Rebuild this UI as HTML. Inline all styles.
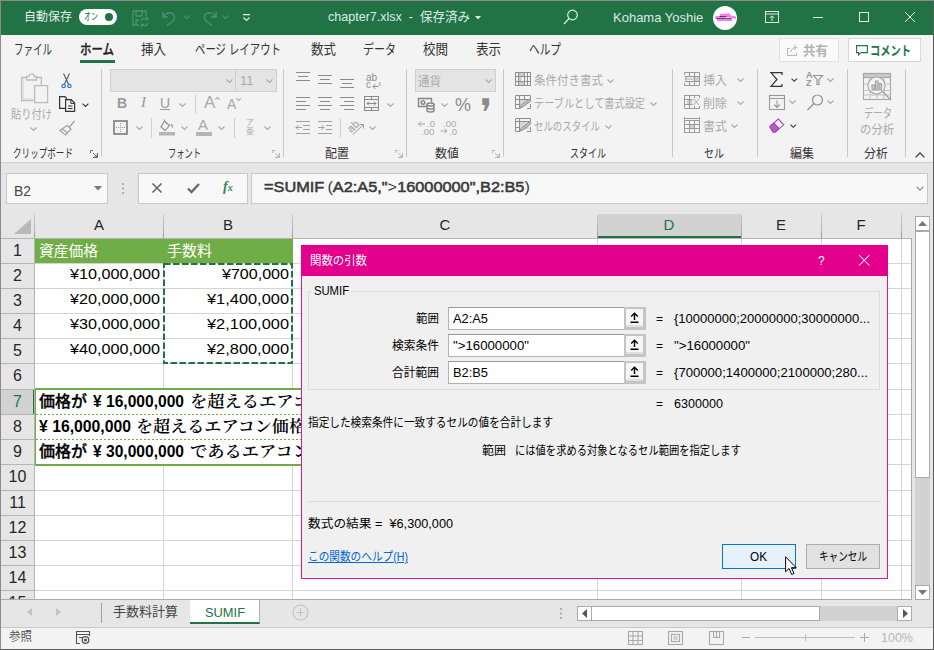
<!DOCTYPE html>
<html lang="ja"><head><meta charset="utf-8"><title>chapter7.xlsx</title>
<style>
*{box-sizing:border-box;margin:0;padding:0}
html,body{width:934px;height:650px;overflow:hidden;background:#e6e6e6}
body{font-family:"Liberation Sans","Noto Sans CJK JP",sans-serif;font-size:12px;color:#333;position:relative}
.a{position:absolute;white-space:nowrap}
.t{position:absolute;white-space:nowrap;line-height:1}
#titlebar{left:0;top:0;width:934px;height:35px;background:#217346}
#tabs{left:0;top:35px;width:934px;height:29px;background:#f3f3f3}
#ribbon{left:0;top:64px;width:934px;height:99px;background:#f3f3f3;border-bottom:1px solid #d0d0d0}
.gl{position:absolute;top:84px;font-size:12px;line-height:1;color:#333;white-space:nowrap}
.sep{position:absolute;top:5px;width:1px;height:88px;background:#c8c8c8}
.ssep{position:absolute;width:1px;height:20px;background:#d0d0d0}
.dis{color:#a9a9a9}
svg{position:absolute;overflow:visible}
.ch{fill:none;stroke:#a9a9a9;stroke-width:1.1}
.chd{fill:none;stroke:#333;stroke-width:1.3}
.ln{position:absolute;background:#d4d4d4}
.rh{position:absolute;left:1px;width:33px;text-align:center;font-size:16px;line-height:1;color:#262626}
.cell{position:absolute;font-size:15px;line-height:1;color:#000;white-space:nowrap}
.dl{position:absolute;white-space:nowrap;line-height:1;font-size:12px;color:#000}
.inp{position:absolute;left:147px;width:198px;height:23px;background:#fff;border:1px solid #b2b2b2;border-top-color:#999}
.ibtn{position:absolute;left:323px;width:22px;height:23px;background:#f6f6f6;border:3px solid #c4c4c4;border-top-width:2px;border-left-width:2px;box-shadow:inset 0 -2px 0 #e0e0e0}
</style></head><body>
<div id="titlebar" class="a">
<div class="t" style="left: 24px; top: 11px; font-size: 12.5px; color: rgb(228, 239, 232); transform: scaleX(0.96); transform-origin: 0px 0px;">自動保存</div>
<div class="a" style="left:79px;top:9px;width:38px;height:16px;border-radius:8px;background:#fff"></div>
<div class="t" style="left: 84px; top: 12px; font-size: 10px; color: rgb(33, 115, 70); transform: scaleX(0.7); transform-origin: 0px 0px;">オン</div>
<div class="a" style="left:105px;top:13px;width:8px;height:8px;border-radius:4px;background:#217346"></div>
<svg style="left:132px;top:10px" width="18" height="17" viewBox="0 0 18 17" fill="none" stroke="#4d9270" stroke-width="1.3"><path d="M1 1h13v6M1 1v14h6M4 1v5h6V1M4 15v-5h3"></path><path d="M9 11a3.5 3.5 0 0 1 6-1.5M16 13a3.5 3.5 0 0 1-6 1.5M15.5 7v2.7h-2.7M9.5 17v-2.7h2.7"></path></svg>
<svg style="left:162px;top:10px" width="16" height="16" viewBox="0 0 16 16" fill="none" stroke="#4d9270" stroke-width="1.4"><path d="M1 2v5h5M1.5 7C3 3.5 7 1.5 10.500 3.500c3 2 2.500 6 0 8L5 15.500"></path></svg>
<svg style="left:183px;top:15px" width="7" height="5" viewBox="0 0 7 5" fill="none" stroke="#4d9270" stroke-width="1.1"><path d="M.5.5l3 3 3-3"></path></svg>
<svg style="left:201px;top:10px" width="16" height="16" viewBox="0 0 16 16" fill="none" stroke="#4d9270" stroke-width="1.4"><path d="M15 2v5h-5M14.500 7C13 3.500 9 1.500 5.500 3.500c-3 2-2.500 6 0 8L11 15.500"></path></svg>
<svg style="left:222px;top:15px" width="7" height="5" viewBox="0 0 7 5" fill="none" stroke="#4d9270" stroke-width="1.1"><path d="M.5.5l3 3 3-3"></path></svg>
<svg style="left:243px;top:14px" width="8" height="8" viewBox="0 0 8 8" fill="none" stroke="#e4efe8" stroke-width="1.1"><path d="M0 .6h7M.5 3.500l3 3 3-3"></path></svg>
<div class="t" style="left: 328px; top: 10px; font-size: 13px; color: rgb(220, 235, 226); transform: scaleX(0.964); transform-origin: 0px 0px;">chapter7.xlsx&nbsp; -&nbsp; 保存済み</div>
<svg style="left:475px;top:16px" width="6" height="4" viewBox="0 0 6 4"><path d="M0 0h6L3 3.500z" fill="#dcebe2"></path></svg>
<svg style="left:563px;top:9px" width="16" height="16" viewBox="0 0 16 16" fill="none" stroke="#dcebe2" stroke-width="1.2"><circle cx="9.500" cy="6" r="4.800"></circle><path d="M6 9.500L1 15"></path></svg>
<div class="t" style="left:613px;top:11px;font-size:13px;color:#dcebe2">Kohama Yoshie</div>
<div class="a" style="left:713px;top:6px;width:24px;height:24px;border-radius:12px;background:#fff"></div>
<svg style="left:713px;top:6px" width="24" height="24" viewBox="0 0 24 24" fill="none" stroke="#f57df0" stroke-width="2.400" stroke-linecap="round"><path d="M3 11.500c3-1 6 1 9-1s5 1 10 1M5 14c4 .5 8-1 13 0M8 9c2-.5 5 .5 8-.5"></path><path d="M4 12.500h14M7 10.500h6" stroke="#222" stroke-width=".8" stroke-dasharray="1.500 1"></path></svg>
<svg style="left:765px;top:11px" width="14" height="12" viewBox="0 0 14 12" fill="none" stroke="#dcebe2" stroke-width="1"><rect x=".5" y=".5" width="13" height="11"></rect><path d="M.5 3h13M7 10V5M4.800 7L7 4.800 9.200 7"></path></svg>
<div class="a" style="left:813px;top:17px;width:10px;height:1px;background:#dcebe2"></div>
<div class="a" style="left:859px;top:12px;width:10px;height:10px;border:1px solid #dcebe2"></div>
<svg style="left:905px;top:12px" width="10" height="10" viewBox="0 0 11 11" stroke="#dcebe2" stroke-width="1.100"><path d="M0 0l11 11M11 0L0 11"></path></svg>
</div>
<div id="tabs" class="a">
<div class="t" style="left: 14px; top: 7px; font-size: 14px; transform: scaleX(0.679); transform-origin: 0px 0px;">ファイル</div>
<div class="t" style="left: 80px; top: 7px; font-size: 14px; font-weight: 500; -webkit-text-stroke: 0.35px rgb(34, 34, 34); color: rgb(34, 34, 34); transform: scaleX(0.817); transform-origin: 0px 0px;">ホーム</div>
<div class="a" style="left:80px;top:25px;width:35px;height:3px;background:#217346"></div>
<div class="t" style="left: 141px; top: 7px; font-size: 14px; transform: scaleX(0.893); transform-origin: 0px 0px;">挿入</div>
<div class="t" style="left: 195px; top: 7px; font-size: 14px; transform: scaleX(0.744); transform-origin: 0px 0px;">ページ レイアウト</div>
<div class="t" style="left: 311px; top: 7px; font-size: 14px; transform: scaleX(0.893); transform-origin: 0px 0px;">数式</div>
<div class="t" style="left: 363px; top: 7px; font-size: 14px; transform: scaleX(0.786); transform-origin: 0px 0px;">データ</div>
<div class="t" style="left: 423px; top: 7px; font-size: 14px; transform: scaleX(0.893); transform-origin: 0px 0px;">校閲</div>
<div class="t" style="left: 476px; top: 7px; font-size: 14px; transform: scaleX(0.893); transform-origin: 0px 0px;">表示</div>
<div class="t" style="left: 529px; top: 7px; font-size: 14px; transform: scaleX(0.762); transform-origin: 0px 0px;">ヘルプ</div>
<div class="a" style="left:779px;top:3px;width:60px;height:24px;background:#fafafa;border:1px solid #e1e1e1"></div>
<svg style="left:787px;top:9px" width="12" height="12" viewBox="0 0 12 12" fill="none" stroke="#b5b5b5" stroke-width="1"><path d="M3 4.500H.5v7h9V9M4 8c0-3 2-4.500 5-4.500M7 1l2.700 2.500L7 6"></path></svg>
<div class="t" style="left: 803px; top: 9px; font-size: 13px; font-weight: bold; color: rgb(179, 179, 179); transform: scaleX(0.961); transform-origin: 0px 0px;">共有</div>
<div class="a" style="left:848px;top:3px;width:73px;height:24px;background:#fff;border:1px solid #d8d8d8"></div>
<svg style="left:856px;top:10px" width="12" height="11" viewBox="0 0 12 11" fill="none" stroke="#217346" stroke-width="1.100"><path d="M.6.6h10.800v7H5L2.500 10V7.600H.6z"></path></svg>
<div class="t" style="left: 870px; top: 9px; font-size: 13px; font-weight: bold; color: rgb(33, 115, 70); transform: scaleX(0.788); transform-origin: 0px 0px;">コメント</div>
</div>
<div id="ribbon" class="a">
<!-- clipboard -->
<svg style="left:21px;top:9px" width="28" height="31" viewBox="0 0 28 31" fill="none" stroke="#bdbdbd" stroke-width="1.300"><path d="M6 4.500H.6v23h12M15 4.500h5.400v8"></path><path d="M2.200 6v20h11" stroke="#dedede" stroke-width="1.600"></path><path d="M5.500 7V3.500h2.300a2.700 2.700 0 0 1 5.400 0h2.300V7z" fill="#f3f3f3"></path><rect x="13.600" y="12.600" width="13" height="17" fill="#f3f3f3"></rect></svg>
<div class="t dis" style="left: 11px; top: 45px; font-size: 12px; transform: scaleX(0.854); transform-origin: 0px 0px;">貼り付け</div>
<svg style="left:30px;top:63px" width="7" height="5" viewBox="0 0 7 5" class="ch"><path d="M.5.5l3 3 3-3"></path></svg>
<svg style="left:61px;top:9px" width="11" height="16" viewBox="0 0 11 16" fill="none"><path d="M2.500 0.500L7.500 11M8.500 0.500L3.500 11" stroke="#555" stroke-width="1.100"></path><circle cx="2.600" cy="13" r="1.700" stroke="#2b7cd3" stroke-width="1.200"></circle><circle cx="8.400" cy="13" r="1.700" stroke="#2b7cd3" stroke-width="1.200"></circle></svg>
<svg style="left:59px;top:32px" width="17" height="16" viewBox="0 0 17 16" fill="none" stroke="#333" stroke-width="1.200"><path d="M6 12.400H.6V.6h5.400l2 2.200"></path><path d="M6.600 3.600h5.600l3.400 3.400v8.400h-9z" fill="#f3f3f3"></path><path d="M11.800 3.600v3.800h3.800M9 10h4.500M9 12.500h4.500" stroke-width="1"></path></svg>
<svg style="left:81.500px;top:38.500px" width="7" height="4.400" viewBox="0 0 8 5" class="chd"><path d="M.7.700l3.300 3.300 3.300-3.300"></path></svg>
<svg style="left:59px;top:56px" width="17" height="16" viewBox="0 0 17 16" fill="none" stroke="#a0a0a0" stroke-width="1.200"><path d="M15.500 1l-5 6M8 5.500l4 3.500-5.500 6L1 10.500zM3.500 9l5 4"></path></svg>
<div class="gl" style="left: 13px; transform: scaleX(0.714); transform-origin: 0px 0px;">クリップボード</div>
<svg style="left:90px;top:86px" width="8" height="8" viewBox="0 0 8 8" fill="none" stroke="#666" stroke-width="1"><path d="M.5 3V.5H3M7.500 3v4.500H3M3 3l4 4M7 4.500V7H4.500"></path></svg>
<div class="sep" style="left:101px"></div>
<!-- font -->
<div class="a" style="left:110px;top:5px;width:126px;height:23px;background:#e4e4e4;border:1px solid #cfcfcf"></div>
<div class="a" style="left:235px;top:5px;width:42px;height:23px;background:#e4e4e4;border:1px solid #cfcfcf"></div>
<svg style="left:226px;top:15px" width="7" height="5" viewBox="0 0 7 5" class="ch"><path d="M.5.5l3 3 3-3"></path></svg>
<div class="t dis" style="left:240px;top:10px;font-size:13px">11</div>
<svg style="left:266px;top:15px" width="7" height="5" viewBox="0 0 7 5" class="ch"><path d="M.5.5l3 3 3-3"></path></svg>
<div class="t" style="left:117px;top:32px;font-size:14px;font-weight:bold;color:#999">B</div>
<div class="t" style="left:141px;top:31px;font-size:15px;font-style:italic;color:#999;font-family:'Liberation Serif',serif">I</div>
<div class="t" style="left:160px;top:32px;font-size:14px;text-decoration:underline;color:#999">U</div>
<svg style="left:179px;top:39px" width="7" height="5" viewBox="0 0 7 5" class="ch"><path d="M.5.5l3 3 3-3"></path></svg>
<div class="ssep" style="left:195px;top:30px"></div>
<div class="t dis" style="left:204px;top:30px;font-size:17px">A</div>
<svg style="left:215px;top:33px" width="5" height="3" viewBox="0 0 5 3" class="ch"><path d="M.3 2.700l2.200-2.200 2.200 2.200"></path></svg>
<div class="t dis" style="left:227px;top:33px;font-size:14px">A</div>
<svg style="left:236px;top:34px" width="5" height="3" viewBox="0 0 5 3" class="ch"><path d="M.3.300l2.200 2.200 2.200-2.200"></path></svg>
<svg style="left:113px;top:56px" width="15" height="15" viewBox="0 0 15 15" fill="none"><rect x="1" y="1" width="13" height="13" stroke="#7a7a7a" stroke-width="1.600"></rect><path d="M7.500 3v9M3 7.500h9" stroke="#9a9a9a" stroke-width="1" stroke-dasharray="1 1"></path></svg>
<svg style="left:136px;top:62px" width="7" height="5" viewBox="0 0 7 5" class="ch"><path d="M.5.5l3 3 3-3"></path></svg>
<div class="ssep" style="left:151px;top:54px"></div>
<svg style="left:159px;top:55px" width="17" height="17" viewBox="0 0 17 17" fill="none"><path d="M5.500 2l5 4.500-4.500 5L2 8zM5.500 2V.5M11.500 5.500c1.500 0 2 2 2 3" stroke="#8a8a8a" stroke-width="1.100"></path><rect x="0" y="13" width="16" height="3.500" fill="#b4b4b4"></rect></svg>
<svg style="left:181px;top:62px" width="7" height="5" viewBox="0 0 7 5" class="ch"><path d="M.5.5l3 3 3-3"></path></svg>
<div class="t dis" style="left:198px;top:53px;font-size:15px">A</div>
<div class="a" style="left:196px;top:68px;width:16px;height:4px;background:#b4b4b4"></div>
<svg style="left:218px;top:62px" width="7" height="5" viewBox="0 0 7 5" class="ch"><path d="M.5.5l3 3 3-3"></path></svg>
<div class="ssep" style="left:234px;top:54px"></div>
<div class="t dis" style="left:246px;top:55px;font-size:8px">ア</div>
<div class="t dis" style="left:246px;top:64px;font-size:8px">亜</div>
<svg style="left:264px;top:62px" width="7" height="5" viewBox="0 0 7 5" class="ch"><path d="M.5.5l3 3 3-3"></path></svg>
<div class="gl" style="left: 168px; transform: scaleX(0.687); transform-origin: 0px 0px;">フォント</div>
<svg style="left:272px;top:86px" width="8" height="8" viewBox="0 0 8 8" fill="none" stroke="#b5b5b5" stroke-width="1"><path d="M.5 3V.5H3M7.500 3v4.500H3M3 3l4 4M7 4.500V7H4.500"></path></svg>
<div class="sep" style="left:283px"></div>
<!-- alignment -->
<svg style="left:296px;top:8px" width="60" height="16" viewBox="0 0 60 16" stroke="#8a8a8a" stroke-width="1" fill="none"><path d="M0 .5h14M2 4.500h10M0 8.500h14"></path><path d="M22 3.500h14M24 7.500h10M22 11.500h14"></path><path d="M44 7.500h14M46 11.500h10M44 15.500h14"></path></svg>
<div class="t dis" style="left:366px;top:9px;font-size:10px;color:#8f8f8f">ab</div>
<div class="t dis" style="left:366px;top:16px;font-size:10px;color:#8f8f8f">c</div>
<svg style="left:372px;top:18px" width="9" height="8" viewBox="0 0 9 8" fill="none" stroke="#8f8f8f" stroke-width="1"><path d="M7.500 0c1.500 2 0 4.500-2.500 4.500H1M3.500 2L1 4.500 3.500 7"></path></svg>
<svg style="left:296px;top:33px" width="60" height="14" viewBox="0 0 60 14" stroke="#8a8a8a" stroke-width="1" fill="none"><path d="M0 .5h14M0 4.500h10M0 8.500h14M0 12.500h10"></path><path d="M22 .5h14M24 4.500h10M22 8.500h14M24 12.500h10"></path><path d="M44 .5h14M48 4.500h10M44 8.500h14M48 12.500h10"></path></svg>
<svg style="left:364px;top:32px" width="16" height="15" viewBox="0 0 16 15" fill="none" stroke="#8a8a8a" stroke-width="1"><rect x=".5" y=".5" width="14" height="14"></rect><path d="M.5 3.500h14M.5 11.500h14M7.500 .5v3M7.500 11.500v3M3 7.500h9M5 5.500l-2 2 2 2M10 5.500l2 2-2 2"></path></svg>
<svg style="left:387px;top:39px" width="7" height="5" viewBox="0 0 7 5" class="ch"><path d="M.5.5l3 3 3-3"></path></svg>
<svg style="left:296px;top:57px" width="38" height="14" viewBox="0 0 38 14" stroke="#a0a0a0" stroke-width="1" fill="none"><path d="M0 .5h14M7 4.500h7M7 8.500h7M0 12.500h14M6 6.500H0M2.500 4L0 6.500 2.500 9"></path><path d="M22 .5h14M30 4.500h6M30 8.500h6M22 12.500h14M22 6.500h6M25.500 4L28 6.500 25.500 9"></path></svg>
<div class="ssep" style="left:340px;top:54px"></div>
<div class="t dis" style="left:347px;top:57px;font-size:11px;transform:rotate(-42deg);color:#9a9a9a">ab</div>
<svg style="left:353px;top:60px" width="11" height="11" viewBox="0 0 11 11" fill="none" stroke="#9a9a9a" stroke-width="1"><path d="M0 10.500L10.500 .5M6.500 .5h4v4"></path></svg>
<svg style="left:369px;top:62px" width="7" height="5" viewBox="0 0 7 5" class="ch"><path d="M.5.5l3 3 3-3"></path></svg>
<div class="gl" style="left: 325px; transform: scaleX(0.999); transform-origin: 0px 0px;">配置</div>
<svg style="left:395px;top:86px" width="8" height="8" viewBox="0 0 8 8" fill="none" stroke="#b5b5b5" stroke-width="1"><path d="M.5 3V.5H3M7.500 3v4.500H3M3 3l4 4M7 4.500V7H4.500"></path></svg>
<div class="sep" style="left:406px"></div>
<!-- number -->
<div class="a" style="left:415px;top:5px;width:81px;height:23px;background:#e4e4e4;border:1px solid #cfcfcf"></div>
<div class="t dis" style="left: 418px; top: 12px; font-size: 12px; transform: scaleX(0.958); transform-origin: 0px 0px;">通貨</div>
<svg style="left:485px;top:15px" width="7" height="5" viewBox="0 0 7 5" class="ch"><path d="M.5.5l3 3 3-3"></path></svg>
<svg style="left:418px;top:34px" width="17" height="15" viewBox="0 0 17 15" fill="none" stroke="#858585" stroke-width="1.400"><path d="M9 8.500H.5v-8h13V4"></path><circle cx="5" cy="4.500" r="1.800"></circle><ellipse cx="12.500" cy="6.500" rx="3.500" ry="1.500"></ellipse><path d="M9 6.500v6c0 .8 1.500 1.500 3.500 1.500s3.500-.7 3.500-1.500v-6M9 9.500c0 .8 1.500 1.500 3.500 1.500S16 10.300 16 9.500"></path></svg>
<svg style="left:441px;top:39px" width="7" height="5" viewBox="0 0 7 5" class="ch"><path d="M.5.5l3 3 3-3"></path></svg>
<div class="t" style="left:455px;top:32px;font-size:18px;color:#8a8a8a">%</div>
<div class="t" style="left:480px;top:30px;font-size:38px;color:#8a8a8a;font-family:'DejaVu Sans',sans-serif">❜</div>
<svg style="left:418px;top:57px" width="16" height="8" viewBox="0 0 16 8" fill="none" stroke="#a5a5a5" stroke-width="1"><path d="M7 3H.5M3 .5L.5 3 3 5.500"></path></svg>
<div class="t dis" style="left:427px;top:55px;font-size:9.500px">.0</div>
<div class="t dis" style="left:421px;top:63px;font-size:9.500px">.00</div>
<div class="t dis" style="left:443px;top:55px;font-size:9.500px">.00</div>
<svg style="left:440px;top:64px" width="16" height="8" viewBox="0 0 16 8" fill="none" stroke="#a5a5a5" stroke-width="1"><path d="M.5 3H7M4.500 .5L7 3 4.500 5.500"></path></svg>
<div class="t dis" style="left:449px;top:63px;font-size:9.500px">.0</div>
<div class="gl" style="left: 435px; transform: scaleX(0.999); transform-origin: 0px 0px;">数値</div>
<svg style="left:492px;top:86px" width="8" height="8" viewBox="0 0 8 8" fill="none" stroke="#b5b5b5" stroke-width="1"><path d="M.5 3V.5H3M7.500 3v4.500H3M3 3l4 4M7 4.500V7H4.500"></path></svg>
<div class="sep" style="left:503px"></div>
<!-- styles -->
<svg style="left:515px;top:8px" width="16" height="14" viewBox="0 0 16 14" fill="none" stroke="#8f8f8f" stroke-width="1"><rect x="3.500" y=".5" width="6" height="4" fill="#cdcdcd" stroke="none"></rect><rect x="3.500" y="4.500" width="3" height="4.500" fill="#cdcdcd" stroke="none"></rect><rect x="3.500" y="9" width="6" height="4" fill="#cdcdcd" stroke="none"></rect><rect x=".5" y=".5" width="15" height="13"></rect><path d="M.5 4.500h15M.5 9.500h15M3.500 .5v13M9.500 .5v13M12.500 .5v13"></path></svg>
<div class="t dis" style="left: 534px; top: 11px; font-size: 12px; transform: scaleX(0.958); transform-origin: 0px 0px;">条件付き書式</div>
<svg style="left:607px;top:15px" width="7" height="5" viewBox="0 0 7 5" class="ch"><path d="M.5.5l3 3 3-3"></path></svg>
<svg style="left:515px;top:31px" width="16" height="14" viewBox="0 0 16 14" fill="none" stroke="#8f8f8f" stroke-width="1"><rect x="4.500" y="4.500" width="7" height="6" fill="#d6d6d6" stroke="none"></rect><path d="M5 13.500H.5V.5h15V5M.5 4.500h15M.5 9.500h5M4.500 .5v13M9.500 .5v5M15.500 9v4.500H12"></path><path d="M4.500 13.500l2-3.500 8-6 1.500 1.800-8 6z" fill="#c0c0c0" stroke="#8f8f8f"></path></svg>
<div class="t dis" style="left: 534px; top: 34px; font-size: 12px; transform: scaleX(0.848); transform-origin: 0px 0px;">テーブルとして書式設定</div>
<svg style="left:650px;top:38px" width="7" height="5" viewBox="0 0 7 5" class="ch"><path d="M.5.5l3 3 3-3"></path></svg>
<svg style="left:515px;top:54px" width="16" height="14" viewBox="0 0 16 14" fill="none" stroke="#8f8f8f" stroke-width="1"><rect x="4.500" y="3.500" width="9" height="8" fill="#d6d6d6" stroke="none"></rect><path d="M5 13.500H.5V.5h15V4M.5 3.500h15M.5 9.500h4M4.500 .5v13M15.500 9v4.500H12"></path><path d="M4.500 13.500l2-3.500 8-6 1.500 1.800-8 6z" fill="#c0c0c0" stroke="#8f8f8f"></path></svg>
<div class="t dis" style="left: 534px; top: 57px; font-size: 12px; transform: scaleX(0.786); transform-origin: 0px 0px;">セルのスタイル</div>
<svg style="left:605px;top:61px" width="7" height="5" viewBox="0 0 7 5" class="ch"><path d="M.5.5l3 3 3-3"></path></svg>
<div class="gl" style="left: 570px; transform: scaleX(0.75); transform-origin: 0px 0px;">スタイル</div>
<div class="sep" style="left:672px"></div>
<!-- cells -->
<svg style="left:684px;top:8px" width="16" height="14" viewBox="0 0 16 14" fill="none" stroke="#9a9a9a" stroke-width="1"><rect x="9.500" y="4.500" width="6" height="5" fill="#cfcfcf" stroke="none"></rect><path d="M.5 3V.5h15v13H.5V11M.5 4.500h15M.5 9.500h15M5.500 .5v4M5.500 9.500v4M10.500 .5v13"></path><path d="M9 7H1M3.500 4.500L1 7l2.500 2.500" stroke="#a8a8a8"></path></svg>
<div class="t dis" style="left: 703px; top: 11px; font-size: 12px; transform: scaleX(0.999); transform-origin: 0px 0px;">挿入</div>
<svg style="left:737px;top:14px" width="7" height="5" viewBox="0 0 7 5" class="ch"><path d="M.5.5l3 3 3-3"></path></svg>
<svg style="left:684px;top:31px" width="16" height="14" viewBox="0 0 16 14" fill="none" stroke="#9a9a9a" stroke-width="1"><rect x="3" y="4.500" width="5.500" height="5" fill="#cfcfcf" stroke="none"></rect><path d="M15.500 3V.5H.5v13h15V11M.5 4.500h8M.5 9.500h8M5.500 .5v13M10.500 .5v2.500M10.500 11v2.500"></path><path d="M9.500 4l5.500 6M15 4l-5.500 6" stroke="#a8a8a8"></path></svg>
<div class="t dis" style="left: 703px; top: 34px; font-size: 12px; transform: scaleX(0.999); transform-origin: 0px 0px;">削除</div>
<svg style="left:737px;top:37px" width="7" height="5" viewBox="0 0 7 5" class="ch"><path d="M.5.5l3 3 3-3"></path></svg>
<svg style="left:684px;top:53px" width="16" height="16" viewBox="0 0 16 16" fill="none" stroke="#9a9a9a" stroke-width="1"><rect x="5.500" y="7.500" width="5" height="4" fill="#cfcfcf" stroke="none"></rect><rect x=".5" y="3.500" width="15" height="12"></rect><path d="M.5 7.500h15M.5 11.500h15M5.500 3.500v12M10.500 3.500v12M.5 0v2.500M15.500 0v2.500M.5 1.500h15"></path></svg>
<div class="t dis" style="left: 703px; top: 57px; font-size: 12px; transform: scaleX(0.999); transform-origin: 0px 0px;">書式</div>
<svg style="left:731px;top:60px" width="7" height="5" viewBox="0 0 7 5" class="ch"><path d="M.5.5l3 3 3-3"></path></svg>
<div class="gl" style="left: 704px; transform: scaleX(0.833); transform-origin: 0px 0px;">セル</div>
<div class="sep" style="left:757px"></div>
<!-- editing -->
<svg style="left:770px;top:8px" width="13" height="15" viewBox="0 0 13 15" fill="none" stroke="#333" stroke-width="1.200"><path d="M12 3V.6H1L7 7.500 1 14.400h11V12"></path></svg>
<svg style="left:791px;top:14px" width="6.500" height="4.200" viewBox="0 0 8 5" class="chd"><path d="M.7.700l3.300 3.300 3.300-3.300"></path></svg>
<div class="t" style="left:806px;top:7px;font-size:9px;font-weight:bold;color:#959595">A</div>
<div class="t" style="left:806px;top:15px;font-size:9px;font-weight:bold;color:#959595">Z</div>
<svg style="left:813px;top:11px" width="10" height="10" viewBox="0 0 10 10" fill="none" stroke="#8f8f8f" stroke-width="1.100"><path d="M.5 .5h9L6 4.500v5H4v-5z"></path></svg>
<svg style="left:827px;top:14px" width="7" height="5" viewBox="0 0 7 5" class="ch"><path d="M.5.5l3 3 3-3"></path></svg>
<svg style="left:769px;top:31px" width="16" height="15" viewBox="0 0 16 15" fill="none" stroke="#9a9a9a" stroke-width="1.100"><rect x=".5" y=".5" width="15" height="14"></rect><path d="M.5 3.500h15M8 5.500v7M5 9.500l3 3 3-3"></path></svg>
<svg style="left:789px;top:36px" width="7" height="5" viewBox="0 0 7 5" class="ch"><path d="M.5.5l3 3 3-3"></path></svg>
<svg style="left:807px;top:30px" width="17" height="17" viewBox="0 0 17 17" fill="none" stroke="#8f8f8f" stroke-width="1.200"><circle cx="10.500" cy="6" r="5"></circle><path d="M7 9.500L.5 16"></path></svg>
<svg style="left:827px;top:36px" width="7" height="5" viewBox="0 0 7 5" class="ch"><path d="M.5.5l3 3 3-3"></path></svg>
<svg style="left:769px;top:54px" width="16" height="14.500" viewBox="0 0 18 16" fill="none" stroke="#a33fb5" stroke-width="1.200"><path d="M1 9.500L10.500 1l6 6.500L7 15.500H4.500z" fill="#fff"></path><path d="M1 9.500L5.500 5.500l6 6.500L7 15.500H4.500z" fill="#b55cc6"></path></svg>
<svg style="left:790px;top:60px" width="6.500" height="4.200" viewBox="0 0 8 5" class="chd"><path d="M.7.700l3.300 3.300 3.300-3.300"></path></svg>
<div class="gl" style="left: 790px; transform: scaleX(0.999); transform-origin: 0px 0px;">編集</div>
<div class="sep" style="left:847px"></div>
<!-- analysis -->
<svg style="left:863px;top:9px" width="29" height="29" viewBox="0 0 29 29" fill="none" stroke="#a5a5a5" stroke-width="1.100"><rect x=".5" y=".5" width="27" height="26"></rect><rect x=".5" y=".5" width="27" height="4" fill="#c9c9c9"></rect><path d="M.5 11h27M.5 17.500h27M.5 22h27M7 4.500v22M14 4.500v22M21 4.500v22" stroke="#c4c4c4"></path><circle cx="13.500" cy="12.500" r="8.500" fill="#f3f3f3"></circle><path d="M20 19l8 8" stroke-width="1.600"></path><rect x="9" y="12" width="2.500" height="5" fill="#c9c9c9"></rect><rect x="12.500" y="8" width="2.500" height="9" fill="#c9c9c9"></rect><rect x="16" y="10.500" width="2.500" height="6.500" fill="#c9c9c9"></rect></svg>
<div class="t dis" style="left: 864px; top: 44px; font-size: 12px; transform: scaleX(0.777); transform-origin: 0px 0px;">データ</div>
<div class="t dis" style="left: 860px; top: 60px; font-size: 12px; transform: scaleX(0.944); transform-origin: 0px 0px;">の分析</div>
<div class="gl" style="left: 864px; transform: scaleX(0.999); transform-origin: 0px 0px;">分析</div>
<div class="sep" style="left:905px"></div>
<svg style="left:914.500px;top:88px" width="10" height="6" viewBox="0 0 12 7" fill="none" stroke="#333" stroke-width="1.500"><path d="M.7 6.300L6 1l5.300 5.300"></path></svg>
</div>
<!-- formula bar -->
<div class="a" style="left:6px;top:173px;width:102px;height:31px;background:#f8f8f8;border:1px solid #c8c8c8"></div>
<div class="t" style="left: 14px; top: 183px; font-size: 15px; color: rgb(68, 68, 68); transform: scaleX(0.926); transform-origin: 0px 0px;">B2</div>
<svg style="left:94px;top:186px" width="8" height="5" viewBox="0 0 8 5"><path d="M0 0h8L4 4.500z" fill="#777"></path></svg>
<svg style="left:122px;top:183px" width="2" height="11" viewBox="0 0 2 11" fill="#b0b0b0"><rect x="0" y="0" width="2" height="2"></rect><rect x="0" y="4.500" width="2" height="2"></rect><rect x="0" y="9" width="2" height="2"></rect></svg>
<div class="a" style="left:138px;top:173px;width:110px;height:31px;background:#f8f8f8;border:1px solid #c8c8c8"></div>
<svg style="left:152px;top:183px" width="10" height="10" viewBox="0 0 10 10" stroke="#666" stroke-width="1.600" fill="none"><path d="M.5 .5l9 9M9.500 .5l-9 9"></path></svg>
<svg style="left:187px;top:183px" width="13" height="10" viewBox="0 0 13 10" stroke="#6a6a6a" stroke-width="2.300" fill="none"><path d="M1 5.500L4.500 9 12 1"></path></svg>
<div class="t" style="left:223px;top:180px;font-size:14px;font-style:italic;font-weight:bold;color:#2e8b57;font-family:'Liberation Serif',serif">f<span style="font-size:10px">x</span></div>
<div class="a" style="left:251px;top:173px;width:677px;height:31px;background:#f8f8f8;border:1px solid #c8c8c8"></div>
<div class="t" style="left: 264px; top: 179px; font-size: 15.5px; font-weight: normal; -webkit-text-stroke: 0.55px rgb(58, 58, 58); color: rgb(58, 58, 58); transform: scaleX(1.052); transform-origin: 0px 0px;">=SUMIF<span style="-webkit-text-stroke:0;font-weight:normal;margin-left:3px">(</span>A2:A5,"<span style="-webkit-text-stroke:0;font-weight:normal">&gt;</span>16000000",B2:B5<span style="-webkit-text-stroke:0;font-weight:normal">)</span></div>
<svg style="left:916px;top:186px" width="8" height="5" viewBox="0 0 8 5" fill="none" stroke="#9a9a9a" stroke-width="1.400"><path d="M.7.700l3.300 3.300 3.300-3.300"></path></svg>
<!-- grid -->
<div class="a" style="left:35px;top:239px;width:877px;height:361px;background:#fff"></div>
<div class="a" style="left:1px;top:214px;width:911px;height:24px;background:#e6e6e6"></div>
<div class="a" style="left:598px;top:214px;width:143px;height:23px;background:#d2d2d2"></div>
<div class="a" style="left:598px;top:236px;width:143px;height:2px;background:#217346"></div>
<svg style="left:14px;top:219px" width="17" height="15" viewBox="0 0 17 15"><path d="M17 0v15H0z" fill="#b8b8b8"></path></svg>
<div class="t" style="left:89px;top:217px;width:20px;text-align:center;font-size:15px;color:#262626">A</div>
<div class="t" style="left:218px;top:217px;width:20px;text-align:center;font-size:15px;color:#262626">B</div>
<div class="t" style="left:435px;top:217px;width:20px;text-align:center;font-size:15px;color:#262626">C</div>
<div class="t" style="left:659px;top:217px;width:20px;text-align:center;font-size:15px;color:#217346">D</div>
<div class="t" style="left:771px;top:217px;width:20px;text-align:center;font-size:15px;color:#262626">E</div>
<div class="t" style="left:851px;top:217px;width:20px;text-align:center;font-size:15px;color:#262626">F</div>
<div class="ln" style="left:34px;top:214px;width:1px;height:24px;background:linear-gradient(#cfcfcf,#9e9e9e)"></div>
<div class="ln" style="left:163px;top:214px;width:1px;height:24px;background:linear-gradient(#cfcfcf,#9e9e9e)"></div>
<div class="ln" style="left:292px;top:214px;width:1px;height:24px;background:linear-gradient(#cfcfcf,#9e9e9e)"></div>
<div class="ln" style="left:597px;top:214px;width:1px;height:24px;background:linear-gradient(#cfcfcf,#9e9e9e)"></div>
<div class="ln" style="left:741px;top:214px;width:1px;height:24px;background:linear-gradient(#cfcfcf,#9e9e9e)"></div>
<div class="ln" style="left:821px;top:214px;width:1px;height:24px;background:linear-gradient(#cfcfcf,#9e9e9e)"></div>
<div class="ln" style="left:901px;top:214px;width:1px;height:24px;background:linear-gradient(#cfcfcf,#9e9e9e)"></div>
<div class="ln" style="left:1px;top:238px;width:911px;height:1px;background:#b4b4b4"></div>
<div class="a" style="left:1px;top:239px;width:33px;height:361px;background:#e6e6e6;overflow:hidden">
<div class="a" style="left:0;top:151px;width:33px;height:24px;background:#d2d2d2"></div>
<div class="rh" style="left:0;top:4px;color:#262626">1</div>
<div class="ln" style="left:0;top:24px;width:33px;height:1px;background:#b4b4b4"></div>
<div class="rh" style="left:0;top:29px;color:#262626">2</div>
<div class="ln" style="left:0;top:49px;width:33px;height:1px;background:#b4b4b4"></div>
<div class="rh" style="left:0;top:54px;color:#262626">3</div>
<div class="ln" style="left:0;top:74px;width:33px;height:1px;background:#b4b4b4"></div>
<div class="rh" style="left:0;top:79px;color:#262626">4</div>
<div class="ln" style="left:0;top:99px;width:33px;height:1px;background:#b4b4b4"></div>
<div class="rh" style="left:0;top:104px;color:#262626">5</div>
<div class="ln" style="left:0;top:124px;width:33px;height:1px;background:#b4b4b4"></div>
<div class="rh" style="left:0;top:129px;color:#262626">6</div>
<div class="ln" style="left:0;top:150px;width:33px;height:1px;background:#b4b4b4"></div>
<div class="rh" style="left:0;top:155px;color:#217346">7</div>
<div class="ln" style="left:0;top:175px;width:33px;height:1px;background:#b4b4b4"></div>
<div class="rh" style="left:0;top:180px;color:#262626">8</div>
<div class="ln" style="left:0;top:200px;width:33px;height:1px;background:#b4b4b4"></div>
<div class="rh" style="left:0;top:205px;color:#262626">9</div>
<div class="ln" style="left:0;top:225px;width:33px;height:1px;background:#b4b4b4"></div>
<div class="rh" style="left:0;top:230px;color:#262626">10</div>
<div class="ln" style="left:0;top:251px;width:33px;height:1px;background:#b4b4b4"></div>
<div class="rh" style="left:0;top:256px;color:#262626">11</div>
<div class="ln" style="left:0;top:276px;width:33px;height:1px;background:#b4b4b4"></div>
<div class="rh" style="left:0;top:281px;color:#262626">12</div>
<div class="ln" style="left:0;top:301px;width:33px;height:1px;background:#b4b4b4"></div>
<div class="rh" style="left:0;top:306px;color:#262626">13</div>
<div class="ln" style="left:0;top:326px;width:33px;height:1px;background:#b4b4b4"></div>
<div class="rh" style="left:0;top:331px;color:#262626">14</div>
<div class="ln" style="left:0;top:351px;width:33px;height:1px;background:#b4b4b4"></div>
<div class="rh" style="left:0;top:356px;color:#262626">15</div>
</div>
<div class="a" style="left:33px;top:390px;width:2px;height:24px;background:#217346"></div>
<div class="ln" style="left:34px;top:239px;width:1px;height:361px;background:#b4b4b4"></div>
<div class="ln" style="left:35px;top:263px;width:877px;height:1px"></div>
<div class="ln" style="left:35px;top:288px;width:877px;height:1px"></div>
<div class="ln" style="left:35px;top:313px;width:877px;height:1px"></div>
<div class="ln" style="left:35px;top:338px;width:877px;height:1px"></div>
<div class="ln" style="left:35px;top:363px;width:877px;height:1px"></div>
<div class="ln" style="left:35px;top:389px;width:877px;height:1px"></div>
<div class="ln" style="left:35px;top:414px;width:877px;height:1px"></div>
<div class="ln" style="left:35px;top:439px;width:877px;height:1px"></div>
<div class="ln" style="left:35px;top:464px;width:877px;height:1px"></div>
<div class="ln" style="left:35px;top:490px;width:877px;height:1px"></div>
<div class="ln" style="left:35px;top:515px;width:877px;height:1px"></div>
<div class="ln" style="left:35px;top:540px;width:877px;height:1px"></div>
<div class="ln" style="left:35px;top:565px;width:877px;height:1px"></div>
<div class="ln" style="left:35px;top:590px;width:877px;height:1px"></div>
<div class="ln" style="left:163px;top:239px;width:1px;height:361px"></div>
<div class="ln" style="left:292px;top:239px;width:1px;height:361px"></div>
<div class="ln" style="left:597px;top:239px;width:1px;height:361px"></div>
<div class="ln" style="left:741px;top:239px;width:1px;height:361px"></div>
<div class="ln" style="left:821px;top:239px;width:1px;height:361px"></div>
<div class="ln" style="left:901px;top:239px;width:1px;height:361px"></div>
<div class="a" style="left:35px;top:239px;width:258px;height:24px;background:#70ad47"></div>
<div class="cell" style="left: 39px; top: 243px; color: rgb(255, 255, 255); transform: scaleX(0.983); transform-origin: 0px 0px;">資産価格</div>
<div class="cell" style="left: 167px; top: 243px; color: rgb(255, 255, 255); transform: scaleX(1); transform-origin: 0px 0px;">手数料</div>
<div class="cell" style="left: 70px; top: 266px; font-size: 15.5px; transform: scaleX(1.044); transform-origin: 0px 0px;">¥10,000,000</div>
<div class="cell" style="left: 222px; top: 266px; font-size: 15.5px; transform: scaleX(1.036); transform-origin: 0px 0px;">¥700,000</div>
<div class="cell" style="left: 70px; top: 291px; font-size: 15.5px; transform: scaleX(1.044); transform-origin: 0px 0px;">¥20,000,000</div>
<div class="cell" style="left: 207px; top: 291px; font-size: 15.5px; transform: scaleX(1.057); transform-origin: 0px 0px;">¥1,400,000</div>
<div class="cell" style="left: 70px; top: 316px; font-size: 15.5px; transform: scaleX(1.044); transform-origin: 0px 0px;">¥30,000,000</div>
<div class="cell" style="left: 207px; top: 316px; font-size: 15.5px; transform: scaleX(1.057); transform-origin: 0px 0px;">¥2,100,000</div>
<div class="cell" style="left: 70px; top: 341px; font-size: 15.5px; transform: scaleX(1.044); transform-origin: 0px 0px;">¥40,000,000</div>
<div class="cell" style="left: 207px; top: 341px; font-size: 15.5px; transform: scaleX(1.057); transform-origin: 0px 0px;">¥2,800,000</div>
<svg style="left:163px;top:263px" width="130" height="101" viewBox="0 0 130 101"><rect x="1" y="1" width="128" height="99" fill="none" stroke="#217346" stroke-width="2" stroke-dasharray="6.500 2.500"></rect></svg>
<div class="a" style="left:35px;top:388px;width:270px;height:78px;background:#fff;border-top:2px solid #70ad47;border-bottom:2px solid #70ad47;border-left:1px solid #70ad47"></div>
<div class="a" style="left:36px;top:414px;width:268px;height:1px;background:repeating-linear-gradient(90deg,#70ad47 0 2px,#fff 2px 4px)"></div>
<div class="a" style="left:36px;top:439px;width:268px;height:1px;background:repeating-linear-gradient(90deg,#70ad47 0 2px,#fff 2px 4px)"></div>
<div class="cell" style="left: 39px; top: 394px; font-size: 16px; font-weight: 500; -webkit-text-stroke: 0.3px rgb(0, 0, 0); transform: scaleX(1); transform-origin: 0px 0px;">価格が</div>
<div class="cell" style="left: 93px; top: 394px; font-size: 16px; font-weight: bold; transform: scaleX(0.974); transform-origin: 0px 0px;">¥ 16,000,000</div>
<div class="cell" style="left: 190px; top: 394px; font-size: 16px; font-family: &quot;Liberation Serif&quot;, &quot;Noto Serif CJK SC&quot;, serif; font-weight: 600; transform: scaleX(1.079); transform-origin: 0px 0px;">を超えるエアコ</div>
<div class="cell" style="left: 39px; top: 419px; font-size: 16px; font-weight: bold; transform: scaleX(0.985); transform-origin: 0px 0px;">¥ 16,000,000</div>
<div class="cell" style="left: 136px; top: 419px; font-size: 16px; font-family: &quot;Liberation Serif&quot;, &quot;Noto Serif CJK SC&quot;, serif; font-weight: 600; transform: scaleX(1.068); transform-origin: 0px 0px;">を超えるエアコン価格</div>
<div class="cell" style="left: 39px; top: 444px; font-size: 16px; font-weight: 500; -webkit-text-stroke: 0.3px rgb(0, 0, 0); transform: scaleX(1); transform-origin: 0px 0px;">価格が</div>
<div class="cell" style="left: 93px; top: 444px; font-size: 16px; font-weight: bold; transform: scaleX(0.974); transform-origin: 0px 0px;">¥ 30,000,000</div>
<div class="cell" style="left: 190px; top: 444px; font-size: 16px; font-family: &quot;Liberation Serif&quot;, &quot;Noto Serif CJK SC&quot;, serif; font-weight: 600; transform: scaleX(1.079); transform-origin: 0px 0px;">であるエアコン</div>
<div class="ln" style="left:911px;top:238px;width:1px;height:362px;background:#ababab"></div>
<div class="ln" style="left:1px;top:599px;width:911px;height:1px;background:#ababab"></div>
<div class="a" style="left:915px;top:216px;width:15px;height:15px;background:#fff;border:1px solid #ababab"></div>
<svg style="left:918px;top:221px" width="9" height="5" viewBox="0 0 9 5"><path d="M0 5h9L4.500 0z" fill="#777"></path></svg>
<div class="a" style="left:915px;top:231px;width:15px;height:354px;background:#d2d2d2"></div>
<div class="a" style="left:915px;top:231px;width:15px;height:247px;background:#fff;border:1px solid #ababab"></div>
<div class="a" style="left:915px;top:585px;width:15px;height:15px;background:#fff;border:1px solid #ababab"></div>
<svg style="left:918px;top:590px" width="9" height="5" viewBox="0 0 9 5"><path d="M0 0h9L4.500 5z" fill="#777"></path></svg>
<!-- sheet tab bar -->
<div class="a" style="left:1px;top:600px;width:932px;height:27px;background:#e6e6e6"></div>
<svg style="left:27px;top:608px" width="5" height="8" viewBox="0 0 5 8"><path d="M5 0v8L0 4z" fill="#c3c3c3"></path></svg>
<svg style="left:56px;top:608px" width="5" height="8" viewBox="0 0 5 8"><path d="M0 0v8l5-4z" fill="#c3c3c3"></path></svg>
<div class="a" style="left:101px;top:603px;width:1px;height:20px;background:#a0a0a0"></div>
<div class="t" style="left: 113px; top: 605px; font-size: 13px; color: rgb(68, 68, 68); transform: scaleX(1); transform-origin: 0px 0px;">手数料計算</div>
<div class="a" style="left:190px;top:600px;width:70px;height:24px;background:#fff;border-bottom:2px solid #217346;border-right:1px solid #b4b4b4"></div>
<div class="t" style="left: 205px; top: 606px; font-size: 13px; color: rgb(33, 115, 70); transform: scaleX(0.989); transform-origin: 0px 0px;">SUMIF</div>
<svg style="left:292px;top:604px" width="17" height="17" viewBox="0 0 17 17" fill="none" stroke="#c3c3c3" stroke-width="1.200"><circle cx="8.500" cy="8.500" r="7.500"></circle><path d="M8.500 4.500v8M4.500 8.500h8"></path></svg>
<svg style="left:560px;top:608px" width="2" height="11" viewBox="0 0 2 11" fill="#b0b0b0"><rect x="0" y="0" width="2" height="2"></rect><rect x="0" y="4.500" width="2" height="2"></rect><rect x="0" y="9" width="2" height="2"></rect></svg>
<!-- h scrollbar -->
<div class="a" style="left:577px;top:606px;width:335px;height:15px;background:#d2d2d2"></div>
<div class="a" style="left:577px;top:606px;width:15px;height:15px;background:#fff;border:1px solid #ababab"></div>
<svg style="left:582px;top:609px" width="5" height="9" viewBox="0 0 5 9"><path d="M5 0v9L0 4.500z" fill="#555"></path></svg>
<div class="a" style="left:591px;top:606px;width:229px;height:15px;background:#fff;border:1px solid #ababab"></div>
<div class="a" style="left:897px;top:606px;width:15px;height:15px;background:#fff;border:1px solid #ababab"></div>
<svg style="left:903px;top:609px" width="5" height="9" viewBox="0 0 5 9"><path d="M0 0v9l5-4.500z" fill="#555"></path></svg>
<!-- status bar -->
<div class="a" style="left:1px;top:627px;width:932px;height:22px;background:#f3f3f3;border-top:1px solid #c8c8c8"></div>
<div class="t" style="left: 9px; top: 631px; font-size: 12px; color: rgb(85, 85, 85); transform: scaleX(0.958); transform-origin: 0px 0px;">参照</div>
<svg style="left:76px;top:631px" width="14" height="13" viewBox="0 0 14 13" fill="none" stroke="#555" stroke-width="1.100"><path d="M4 12.500H.5V.5h13V5M.5 3.500h13M3 6.500h4"></path><circle cx="9.500" cy="9" r="3.300" stroke-width="1.300"></circle><circle cx="9.500" cy="9" r="1" fill="#555"></circle></svg>
<svg style="left:628px;top:631px" width="15" height="14" viewBox="0 0 15 14" fill="none" stroke="#a9a9a9" stroke-width="1.100"><rect x=".5" y=".5" width="14" height="13"></rect><path d="M.5 5h14M.5 9.500h14M5 .5v13M10 .5v13"></path></svg>
<svg style="left:668px;top:631px" width="15" height="14" viewBox="0 0 15 14" fill="none" stroke="#a9a9a9" stroke-width="1.100"><rect x=".5" y=".5" width="14" height="13"></rect><rect x="3.500" y="3.500" width="8" height="7"></rect><path d="M5.500 6h4M5.500 8h4"></path></svg>
<svg style="left:709px;top:631px" width="15" height="14" viewBox="0 0 15 14" fill="none" stroke="#a9a9a9" stroke-width="1.100"><rect x=".5" y=".5" width="14" height="13"></rect><path d="M4.500 .5v6h6v-6M7.500 .5v6"></path></svg>
<div class="a" style="left:742px;top:637px;width:8px;height:1px;background:#a9a9a9"></div>
<div class="a" style="left:755px;top:637px;width:100px;height:1px;background:#bdbdbd"></div>
<div class="a" style="left:805px;top:634px;width:1px;height:7px;background:#bdbdbd"></div>
<div class="a" style="left:860px;top:637px;width:9px;height:1px;background:#a9a9a9"></div>
<div class="a" style="left:864px;top:633px;width:1px;height:9px;background:#a9a9a9"></div>
<div class="t" style="left: 881px; top: 631px; font-size: 13px; color: rgb(181, 181, 181); transform: scaleX(0.962); transform-origin: 0px 0px;">100%</div>
<!-- dialog -->
<div id="dlg" class="a" style="left:301px;top:245px;width:587px;height:334px;background:#f0f0f0;box-shadow:inset 0 0 0 1px #e3149a">
<div class="a" style="left:0;top:0;width:587px;height:31px;background:#e3008c"></div>
<div class="dl" style="left: 9px; top: 10px; color: rgb(255, 255, 255); transform: scaleX(0.95); transform-origin: 0px 0px;">関数の引数</div>
<div class="dl" style="left:517px;top:10px;color:#fff;font-size:12px">?</div>
<svg style="left:558px;top:10px" width="10.500" height="10.500" viewBox="0 0 11 11" stroke="#fff" stroke-width="1.100"><path d="M0 0l11 11M11 0L0 11"></path></svg>
<div class="a" style="left:7px;top:46px;width:572px;height:99px;border:1px solid #dcdcdc"></div>
<div class="dl" style="left: 11px; top: 40px; background: rgb(240, 240, 240); padding: 0px 2px; transform: scaleX(0.943); transform-origin: 0px 0px;">SUMIF</div>
<div class="dl" style="left: 115px; top: 68px; transform: scaleX(0.958); transform-origin: 0px 0px;">範囲</div>
<div class="dl" style="left: 91px; top: 95px; transform: scaleX(0.979); transform-origin: 0px 0px;">検索条件</div>
<div class="dl" style="left: 91px; top: 122px; transform: scaleX(0.979); transform-origin: 0px 0px;">合計範囲</div>
<div class="inp" style="top:62px"></div><div class="ibtn" style="top:62px"></div><svg style="left:329px;top:67px" width="9" height="11" viewBox="0 0 9 11" fill="none" stroke="#000" stroke-width="1.400"><path d="M4.500 8V1.500M1.200 4.500L4.500 1.200l3.300 3.300M.5 10.300h8"></path></svg>
<div class="inp" style="top:89px"></div><div class="ibtn" style="top:89px"></div><svg style="left:329px;top:94px" width="9" height="11" viewBox="0 0 9 11" fill="none" stroke="#000" stroke-width="1.400"><path d="M4.500 8V1.500M1.200 4.500L4.500 1.200l3.300 3.300M.5 10.300h8"></path></svg>
<div class="inp" style="top:116px"></div><div class="ibtn" style="top:116px"></div><svg style="left:329px;top:121px" width="9" height="11" viewBox="0 0 9 11" fill="none" stroke="#000" stroke-width="1.400"><path d="M4.500 8V1.500M1.200 4.500L4.500 1.200l3.300 3.300M.5 10.300h8"></path></svg>
<div class="dl" style="left: 152px; top: 68px; transform: scaleX(1.07); transform-origin: 0px 0px;">A2:A5</div>
<div class="dl" style="left: 152px; top: 95px; transform: scaleX(1.103); transform-origin: 0px 0px;">"&gt;16000000"</div>
<div class="dl" style="left: 152px; top: 122px; transform: scaleX(1.07); transform-origin: 0px 0px;">B2:B5</div>
<div class="dl" style="left:355px;top:68px">=</div>
<div class="dl" style="left:355px;top:95px">=</div>
<div class="dl" style="left:355px;top:122px">=</div>
<div class="dl" style="left:355px;top:153px">=</div>
<div class="dl" style="left: 373px; top: 68px; transform: scaleX(1.084); transform-origin: 0px 0px;">{10000000;20000000;30000000...</div>
<div class="dl" style="left: 373px; top: 95px; transform: scaleX(1.103); transform-origin: 0px 0px;">"&gt;16000000"</div>
<div class="dl" style="left: 373px; top: 122px; transform: scaleX(1.093); transform-origin: 0px 0px;">{700000;1400000;2100000;280...</div>
<div class="dl" style="left: 373px; top: 153px; transform: scaleX(1.049); transform-origin: 0px 0px;">6300000</div>
<div class="dl" style="left: 7px; top: 172px; transform: scaleX(0.888); transform-origin: 0px 0px;">指定した検索条件に一致するセルの値を合計します</div>
<div class="dl" style="left: 181px; top: 200px; transform: scaleX(0.999); transform-origin: 0px 0px;">範囲</div>
<div class="dl" style="left: 214px; top: 200px; transform: scaleX(0.857); transform-origin: 0px 0px;">には値を求める対象となるセル範囲を指定します</div>
<div class="a" style="left:7px;top:256px;width:573px;height:1px;background:#dcdcdc"></div>
<div class="dl" style="left: 7px; top: 273px; transform: scaleX(1.058); transform-origin: 0px 0px;">数式の結果 =&nbsp; ¥6,300,000</div>
<div class="dl" style="left: 7px; top: 306px; color: rgb(0, 102, 204); text-decoration: underline; transform: scaleX(0.888); transform-origin: 0px 0px;">この関数のヘルプ(H)</div>
<div class="a" style="left:421px;top:299px;width:74px;height:25px;background:#e5f1fb;border:1px solid #0078d7"></div>
<div class="dl" style="left: 449px; top: 306px; transform: scaleX(0.98); transform-origin: 0px 0px;">OK</div>
<div class="a" style="left:505px;top:299px;width:74px;height:25px;background:#e1e1e1;border:1px solid #adadad"></div>
<div class="dl" style="left: 518px; top: 306px; transform: scaleX(0.8); transform-origin: 0px 0px;">キャンセル</div>
</div>
<!-- cursor -->
<svg style="left:785px;top:556px" width="13" height="20" viewBox="0 0 13 20"><path d="M.6.800v15l3.500-3.300 2.600 6 2.300-1-2.600-5.800h4.800z" fill="#fff" stroke="#000" stroke-width="1"></path></svg>
<div class="a" style="left:0;top:0;width:934px;height:650px;border:1px solid #8e8a8c;border-right-color:#5c5c5c;border-bottom-color:#5c5c5c;pointer-events:none"></div>

</body></html>
